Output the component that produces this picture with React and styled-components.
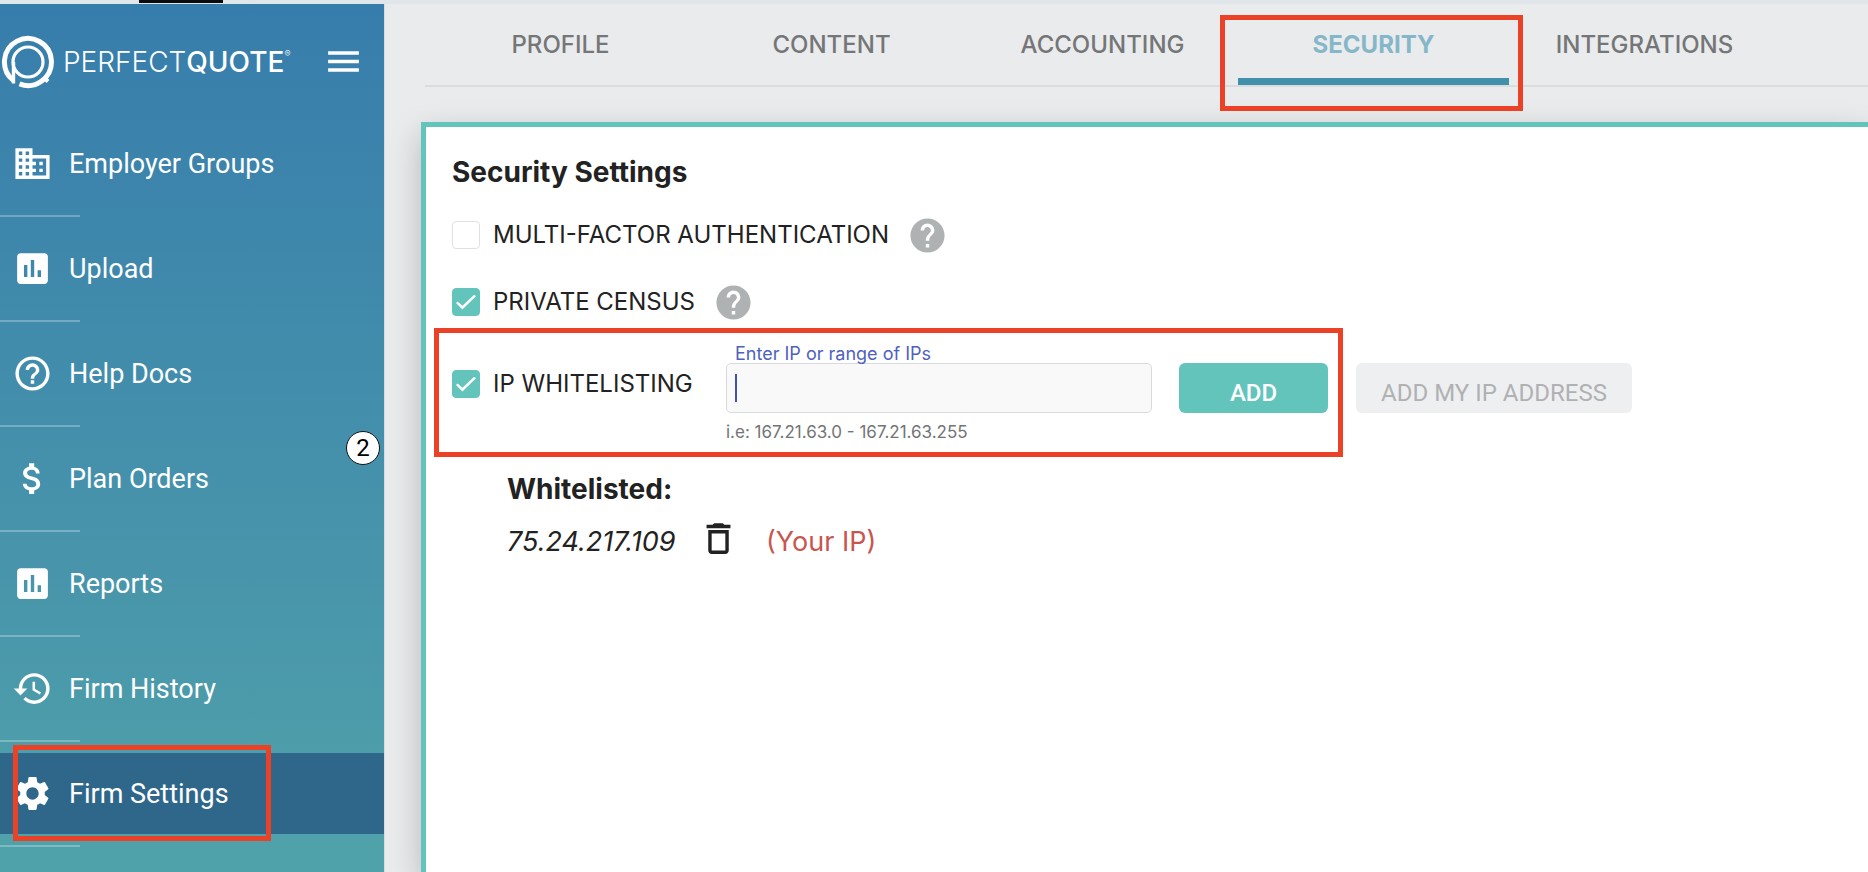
import React from "react";
import styled, { createGlobalStyle } from "styled-components";
import {
  MdBusiness,
  MdAssessment,
  MdHelpOutline,
  MdAttachMoney,
  MdHistory,
  MdSettings,
  MdMenu,
  MdHelp,
  MdDeleteOutline,
} from "react-icons/md";

const GlobalStyle = createGlobalStyle`
  *, *::before, *::after { box-sizing: border-box; }
  body {
    margin: 0;
    background: #eaebed;
    color: #222;
    font-family: "Inter", "Liberation Sans", sans-serif;
  }
`;

const Page = styled.div`
  display: flex;
  flex-direction: column;
  min-height: 100vh;
`;

const TopStrip = styled.div`
  height: 4px;
  padding-left: 139px;
  background: #e1e6ea;
`;

const TopMark = styled.div`
  width: 84px;
  height: 3px;
  background: #0c0c0e;
`;

const Shell = styled.div`
  display: flex;
  flex: 1;
`;

const Sidebar = styled.aside`
  position: relative;
  flex: 0 0 384px;
  background: linear-gradient(#377dac, #4895ab 65%, #50a2aa);
  font-family: "Roboto", "Liberation Sans", sans-serif;
  color: #fff;
`;

const Brand = styled.div`
  display: flex;
  align-items: center;
  height: 119px;
  padding: 0 20px 4px 0;
`;

const BrandName = styled.div`
  flex: 1;
  display: flex;
  align-items: flex-start;
  margin-left: 7px;
  font-family: "Inter", "Liberation Sans", sans-serif;
  font-size: 28px;
  line-height: 32px;
  font-weight: 300;

  b { font-weight: 500; }
  small { font-size: 9px; line-height: 16px; }
`;

const IconButton = styled.button`
  display: flex;
  padding: 0;
  border: 0;
  background: none;
  color: inherit;
  cursor: pointer;
`;

const MenuList = styled.ul`
  margin: 0;
  padding: 0;
  list-style: none;
`;

const MenuItem = styled.li`
  position: relative;

  &::after {
    content: "";
    display: block;
    width: 80px;
    height: 2px;
    margin: 11px 0;
    background: rgba(255, 255, 255, 0.27);
  }
`;

const MenuLink = styled.a`
  display: flex;
  align-items: center;
  gap: 16px;
  height: 81px;
  padding-left: 12px;
  background: ${(p) => (p.$active ? "#2f678b" : "none")};
  color: #fff;
  font-size: 27px;
  text-decoration: none;

  svg { width: 41px; height: 41px; }
`;

const Badge = styled.span`
  position: absolute;
  top: 427px;
  right: 4px;
  display: flex;
  align-items: center;
  justify-content: center;
  width: 34px;
  height: 34px;
  border: 1px solid #111;
  border-radius: 50%;
  background: #fff;
  color: #000;
  font-size: 24px;
`;

const Callout = styled.span`
  position: absolute;
  inset: ${(p) => p.$inset};
  border: 5px solid #eb4126;
  pointer-events: none;
`;

const Main = styled.main`
  display: flex;
  flex: 1;
  flex-direction: column;
  min-width: 0;
  border-left: 1px solid #d8dadc;
  overflow: hidden;
`;

const Tabs = styled.nav`
  display: flex;
  height: 83px;
  margin-left: 40px;
  border-bottom: 2px solid #dadcdd;
`;

const Tab = styled.a`
  position: relative;
  flex: 0 0 271px;
  padding-top: 27px;
  border-bottom: 7px solid ${(p) => (p.$active ? "#4191ac" : "transparent")};
  color: ${(p) => (p.$active ? "#86b7c9" : "#757677")};
  font-size: 24px;
  font-weight: ${(p) => (p.$active ? 700 : 500)};
  line-height: 28px;
  text-align: center;
  text-decoration: none;
`;

const Card = styled.section`
  flex: 1;
  margin: 35px 0 0 36px;
  padding: 28px 26px;
  border: solid #63c4bc;
  border-width: 5px 0 0 5px;
  background: #fff;
  box-shadow: 0 12px 30px rgba(0, 0, 0, 0.22);
`;

const Title = styled.h1`
  margin: 0;
  font-size: 28px;
  line-height: 34px;
`;

const Option = styled.div`
  display: flex;
  align-items: center;
  gap: 18px;
  height: 34px;
  margin-top: ${(p) => p.$space}px;
  font-size: 24px;
`;

const OptionLabel = styled.label`
  display: flex;
  align-items: center;
  gap: 13px;
  font-size: 24px;
  line-height: 28px;
  white-space: nowrap;
`;

const Checkbox = styled.input.attrs({ type: "checkbox" })`
  appearance: none;
  display: grid;
  place-items: center;
  width: 28px;
  height: 28px;
  margin: 0;
  border: 1px solid #e0e1e2;
  border-radius: 4px;
  background: #fff;

  &:checked {
    border-color: #63c4bc;
    background: #63c4bc;
  }

  &:checked::before {
    content: "";
    width: 20px;
    height: 15px;
    background: #fff;
    clip-path: polygon(0 57%, 8% 46%, 32% 75%, 92% 0, 100% 11%, 32% 100%);
  }
`;

const HelpIcon = styled(MdHelp)`
  width: 41px;
  height: 41px;
  color: #afb2b3;
`;

const WhitelistRow = styled.div`
  position: relative;
  display: flex;
  align-items: flex-start;
  width: max-content;
  margin-top: 18px;
  padding-top: 7px;

  & > ${OptionLabel} {
    width: 274px;
    padding-top: 26px;
  }
`;

const Field = styled.div`
  display: flex;
  flex-direction: column;
  width: 426px;
`;

const FieldLabel = styled.label`
  position: relative;
  z-index: 1;
  padding: 1px 0 0 9px;
  color: #4f5fc0;
  font-size: 18px;
  line-height: 18px;
`;

const TextBox = styled.input`
  height: 50px;
  padding: 0 9px;
  border: 1px solid #d9dadb;
  border-radius: 5px;
  background: #f9f9f9;
  color: #222;
  font: 24px "Inter", "Liberation Sans", sans-serif;
  outline: none;
`;

const InputWrap = styled.div`
  position: relative;
  display: grid;
`;

const Caret = styled.span`
  position: absolute;
  top: 11px;
  left: 9px;
  width: 2px;
  height: 28px;
  background: #3f51b5;
`;

const Hint = styled.span`
  margin-top: 9px;
  color: #737475;
  font-size: 17px;
  line-height: 20px;
`;

const Actions = styled.div`
  display: flex;
  gap: 28px;
  padding: 19px 0 0 27px;
`;

const ActionButton = styled.button`
  height: 50px;
  width: ${(p) => p.$width}px;
  padding: 10px 0 0;
  border: 0;
  border-radius: 6px;
  background: #63c4bc;
  color: #fff;
  font: 500 24px "Roboto", "Liberation Sans", sans-serif;
  white-space: nowrap;

  &:disabled {
    background: #eeeff1;
    color: #b0b1b2;
    font-weight: 400;
  }
`;

const Whitelisted = styled.div`
  padding: 30px 0 0 55px;
`;

const ListTitle = styled.h2`
  margin: 0;
  font-size: 28px;
  line-height: 34px;
`;

const Address = styled.div`
  display: flex;
  align-items: flex-start;
  margin-top: 12px;
  font-size: 27px;
  line-height: 48px;

  em { width: 191px; }
`;

const OwnNote = styled.span`
  margin-left: 27px;
  color: #c9564e;
`;

const MENU = [
  { label: "Employer Groups", Icon: MdBusiness },
  { label: "Upload", Icon: MdAssessment },
  { label: "Help Docs", Icon: MdHelpOutline },
  { label: "Plan Orders", Icon: MdAttachMoney },
  { label: "Reports", Icon: MdAssessment },
  { label: "Firm History", Icon: MdHistory },
  { label: "Firm Settings", Icon: MdSettings, active: true },
];

const TABS = ["PROFILE", "CONTENT", "ACCOUNTING", "SECURITY", "INTEGRATIONS"];

function LogoMark() {
  return (
    <svg width="56" height="56" viewBox="0 0 56 56" fill="none" stroke="#fff" aria-hidden="true">
      <path d="M13.5 46.5 A23.5 23.5 0 1 1 19.5 49.9" strokeWidth="5" />
      <circle cx="28" cy="28" r="15" strokeWidth="3.2" />
      <path d="M13.5 28V49.5" strokeWidth="3.4" />
      <path d="M44.5 44l3.5 3.5" strokeWidth="4" />
    </svg>
  );
}

export default function App() {
  return (
    <Page>
      <GlobalStyle />
      <TopStrip>
        <TopMark />
      </TopStrip>
      <Shell>
        <Sidebar>
          <Brand>
            <LogoMark />
            <BrandName>
              <span>PERFECT<b>QUOTE</b></span>
              <small>®</small>
            </BrandName>
            <IconButton aria-label="Toggle menu">
              <MdMenu size={41} />
            </IconButton>
          </Brand>
          <MenuList>
            {MENU.map(({ label, Icon, active }) => (
              <MenuItem key={label}>
                <MenuLink href="#" $active={active}>
                  <Icon />
                  {label}
                </MenuLink>
                {active && <Callout $inset="-8px 113px 6px 13px" />}
              </MenuItem>
            ))}
          </MenuList>
          <Badge>2</Badge>
        </Sidebar>
        <Main>
          <Tabs>
            {TABS.map((name) => (
              <Tab key={name} href="#" $active={name === "SECURITY"}>
                {name}
                {name === "SECURITY" && <Callout $inset="11px -14px -33px -18px" />}
              </Tab>
            ))}
          </Tabs>
          <Card>
            <Title>Security Settings</Title>
            <Option $space={29}>
              <OptionLabel>
                <Checkbox />
                MULTI-FACTOR AUTHENTICATION
              </OptionLabel>
              <HelpIcon />
            </Option>
            <Option $space={33}>
              <OptionLabel>
                <Checkbox defaultChecked />
                PRIVATE CENSUS
              </OptionLabel>
              <HelpIcon />
            </Option>
            <WhitelistRow>
              <OptionLabel>
                <Checkbox defaultChecked />
                IP WHITELISTING
              </OptionLabel>
              <Field>
                <FieldLabel htmlFor="ip">Enter IP or range of IPs</FieldLabel>
                <InputWrap>
                  <TextBox id="ip" type="text" />
                  <Caret />
                </InputWrap>
                <Hint>i.e: 167.21.63.0 - 167.21.63.255</Hint>
              </Field>
              <Actions>
                <ActionButton $width={149}>ADD</ActionButton>
                <ActionButton $width={276} disabled>ADD MY IP ADDRESS</ActionButton>
              </Actions>
              <Callout $inset="-9px 289px -15px -18px" />
            </WhitelistRow>
            <Whitelisted>
              <ListTitle>Whitelisted:</ListTitle>
              <Address>
                <em>75.24.217.109</em>
                <IconButton aria-label="Remove 75.24.217.109">
                  <MdDeleteOutline size={41} />
                </IconButton>
                <OwnNote>(Your IP)</OwnNote>
              </Address>
            </Whitelisted>
          </Card>
        </Main>
      </Shell>
    </Page>
  );
}
